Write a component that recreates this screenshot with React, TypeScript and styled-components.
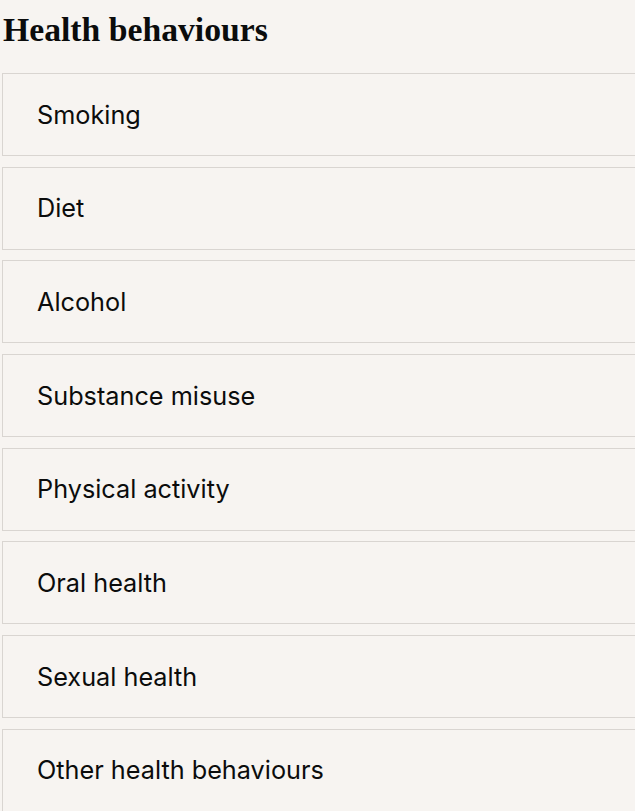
import React from "react";
import styled, { createGlobalStyle } from "styled-components";

const GlobalStyle = createGlobalStyle`
  html, body {
    margin: 0;
    padding: 0;
    background: #f7f4f1;
    overflow: hidden;
  }
`;

const Page = styled.main`
  padding: 0 0 0 2px;
  width: 720px;
  color: #0b0c0c;
`;

const Heading = styled.h2`
  margin: 0;
  padding: 11px 0 0 1px;
  height: 73px;
  box-sizing: border-box;
  font-family: "Liberation Serif", serif;
  font-weight: 700;
  font-size: 33.7px;
  line-height: 38px;
`;

const List = styled.ul`
  list-style: none;
  margin: 0;
  padding: 0;
  display: flex;
  flex-direction: column;
  gap: 10.7px;
`;

const Card = styled.li`
  box-sizing: border-box;
  height: 83px;
  border: 1px solid #d9d5d1;
  background: #f7f4f1;
  display: flex;
  align-items: center;
  padding: 0 34px;
  font-family: Inter, "Noto Sans", sans-serif;
  font-size: 25.25px;
`;

const items = [
  "Smoking",
  "Diet",
  "Alcohol",
  "Substance misuse",
  "Physical activity",
  "Oral health",
  "Sexual health",
  "Other health behaviours",
];

export default function App() {
  return (
    <>
      <GlobalStyle />
      <Page>
        <Heading>Health behaviours</Heading>
        <List>
          {items.map((t) => (
            <Card key={t}>{t}</Card>
          ))}
        </List>
      </Page>
    </>
  );
}
